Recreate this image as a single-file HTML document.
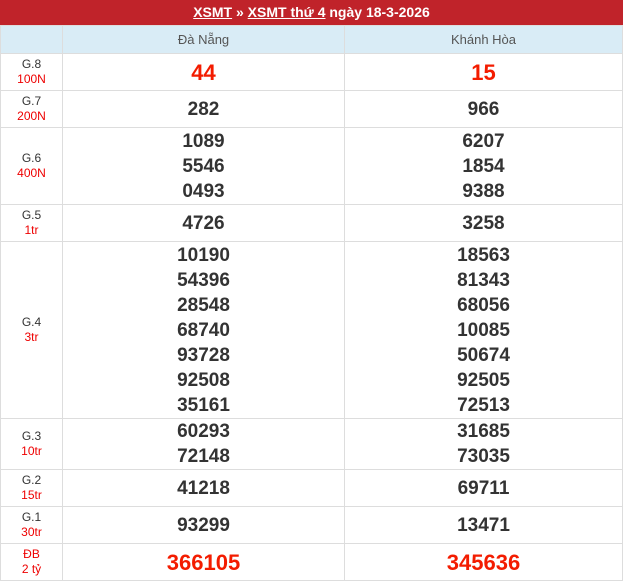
<!DOCTYPE html>
<html><head><meta charset="utf-8"><style>
body{margin:0;width:623px;height:573px;overflow:hidden;font-family:"Liberation Sans",Arial,sans-serif;background:#fff}
.top{height:25px;background:#c0232a;color:#fff;font-weight:bold;font-size:14px;text-align:center;line-height:24px}
.top a{color:#fff;text-decoration:underline}
table{border-collapse:collapse;width:623px;table-layout:fixed}
td{border:1px solid #ddd;text-align:center;padding:0;vertical-align:middle}
.h td{background:#d9ecf6;color:#555;font-size:13px;height:27px}
.l{font-size:12px;color:#333;line-height:15px}
.l span{color:#e00}
.n{font-size:19px;font-weight:bold;color:#333;line-height:25px}
.r{color:#f31c00;font-size:22px}
</style></head><body>
<div class="top"><a>XSMT</a> » <a>XSMT thứ 4</a> ngày 18-3-2026</div>
<table>
<col style="width:62px"><col style="width:282px"><col>
<tr class="h"><td></td><td>Đà Nẵng</td><td>Khánh Hòa</td></tr>
<tr style="height:37px"><td class="l">G.8<br><span>100N</span></td><td class="n r">44</td><td class="n r">15</td></tr>
<tr style="height:37px"><td class="l">G.7<br><span>200N</span></td><td class="n">282</td><td class="n">966</td></tr>
<tr style="height:77px"><td class="l">G.6<br><span>400N</span></td><td class="n">1089<br>5546<br>0493</td><td class="n">6207<br>1854<br>9388</td></tr>
<tr style="height:37px"><td class="l">G.5<br><span>1tr</span></td><td class="n">4726</td><td class="n">3258</td></tr>
<tr style="height:177px"><td class="l">G.4<br><span>3tr</span></td><td class="n">10190<br>54396<br>28548<br>68740<br>93728<br>92508<br>35161</td><td class="n">18563<br>81343<br>68056<br>10085<br>50674<br>92505<br>72513</td></tr>
<tr style="height:51px"><td class="l">G.3<br><span>10tr</span></td><td class="n">60293<br>72148</td><td class="n">31685<br>73035</td></tr>
<tr style="height:37px"><td class="l">G.2<br><span>15tr</span></td><td class="n">41218</td><td class="n">69711</td></tr>
<tr style="height:37px"><td class="l">G.1<br><span>30tr</span></td><td class="n">93299</td><td class="n">13471</td></tr>
<tr style="height:37px"><td class="l"><span>ĐB<br>2 tỷ</span></td><td class="n r">366105</td><td class="n r">345636</td></tr>
</table>
</body></html>
